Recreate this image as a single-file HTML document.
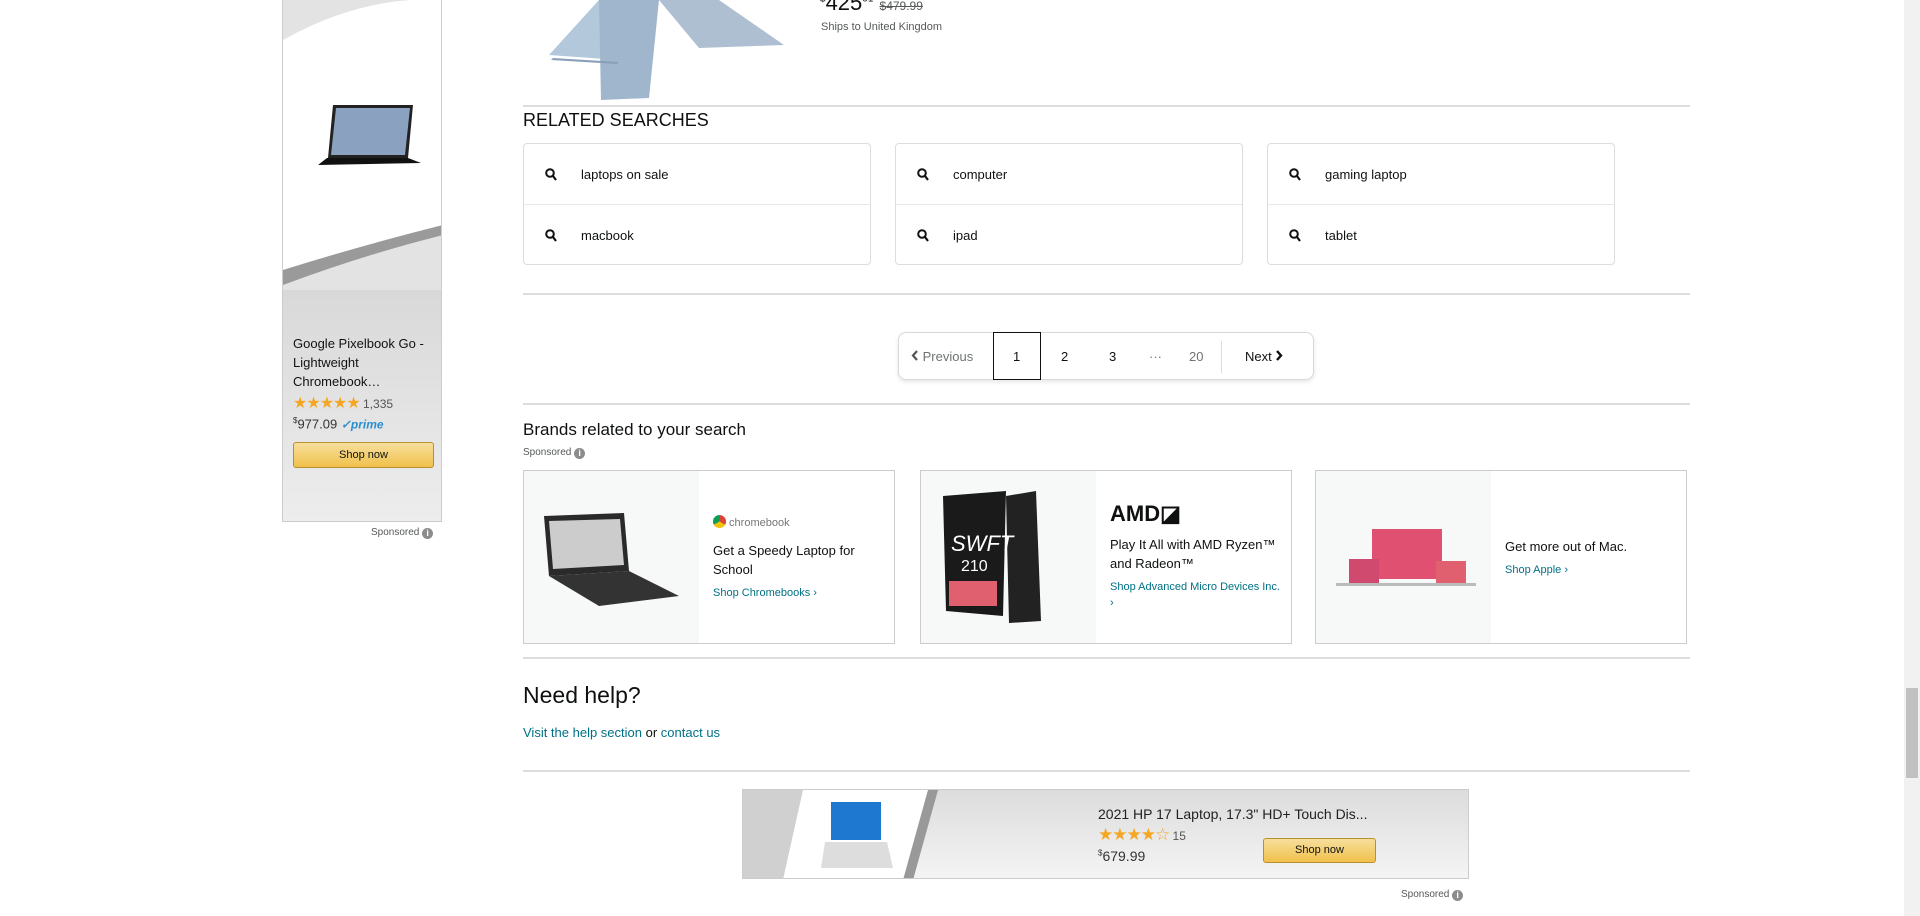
<!DOCTYPE html>
<html><head><meta charset="utf-8"><style>
*{box-sizing:border-box;margin:0;padding:0}
body{width:1920px;height:916px;overflow:hidden;background:#fff;font-family:"Liberation Sans",Arial,sans-serif;color:#0f1111;position:relative}
.a{position:absolute}
.hr{position:absolute;left:523px;width:1167px;height:2px;background:#ddd}
.rs{position:absolute;width:348px;height:122px;border:1px solid #ddd;border-radius:4px}
.rs div{height:61px;display:flex;align-items:center;font-size:13px;color:#0f1111}
.rs div:first-child{border-bottom:1px solid #e7e7e7}
.rs svg{margin:0 24px 0 21px}
.card{position:absolute;top:470px;width:372px;height:174px;border:1px solid #ccc;display:flex}
.card .im{width:175px;background:#f7f8f8;height:100%;position:relative}
.card .tx{padding-left:14px;display:flex;flex-direction:column;justify-content:center;font-size:13px;line-height:19px;width:185px}
.lk{color:#007185;font-size:11px;line-height:16px;margin-top:6px}
.sp{font-size:10px;color:#565959}
.i{display:inline-block;width:11px;height:11px;border-radius:50%;background:#8c8c8c;color:#fff;font-size:9px;line-height:11px;text-align:center;font-weight:bold;vertical-align:-1px}
.pg{position:absolute;top:332px;left:898px;width:416px;height:48px;border:1px solid #d5d9d9;border-radius:8px;box-shadow:0 2px 4px rgba(0,0,0,.1);font-size:13px}
.pg span{position:absolute;top:16px}
</style></head><body>
<div class="a" style="left:282px;top:0;width:160px;height:522px;border:1px solid #ccc;border-top:none;background:linear-gradient(#e0e0e0,#d6d6d6 50%,#ededed);overflow:hidden">
<svg width="160" height="290" style="position:absolute;left:0;top:0"><rect width="160" height="290" fill="#e3e3e3"/><path d="M0 40 Q80 -5 160 0 L160 225 Q80 245 0 270Z" fill="#fff"/><path d="M0 270 Q80 245 160 225 L160 235 Q80 255 0 285Z" fill="#9a9a9a"/><g transform="translate(20,100)"><path d="M30 5 L110 5 L105 58 L25 58Z" fill="#222"/><path d="M33 8 L107 8 L102 55 L28 55Z" fill="#8aa2c0"/><path d="M24 58 L105 58 L118 63 L15 65Z" fill="#111"/></g></svg>
<div class="a" style="left:10px;top:334px;width:142px;font-size:13px;line-height:19px;color:#111">Google Pixelbook Go - Lightweight Chromebook…</div>
<div class="a" style="left:10px;top:393px;font-size:12px;color:#555"><span style="color:#f5a623;font-size:16px;letter-spacing:-1px">★★★★★</span> 1,335</div>
<div class="a" style="left:10px;top:416px;font-size:13px;color:#333"><sup style="font-size:8px">$</sup>977.09 <span style="color:#2a8fcf;font-weight:bold;font-style:italic;font-size:12px">✓prime</span></div>
<div class="a" style="left:10px;top:442px;width:141px;height:26px;border:1px solid #b8912f;border-radius:3px;background:linear-gradient(#f7df9c,#f0c14b);font-size:11px;text-align:center;line-height:24px">Shop now</div>
</div>
<div class="a sp" style="left:371px;top:527px">Sponsored <span class="i">i</span></div>
<svg class="a" style="left:539px;top:0" width="250" height="102"><path d="M10 55 L60 0 L120 0 L80 60Z" fill="#b4c8dc"/><path d="M120 0 L180 0 L245 45 L160 48Z" fill="#aebfd2"/><path d="M60 0 L120 0 L110 98 L62 100Z" fill="#9fb6cc"/><path d="M14 58 L80 62 L78 64 L12 60Z" fill="#8aa0b8"/></svg>
<div class="a" style="left:820px;top:-10px;font-size:22px;color:#0f1111"><sup style="font-size:10px">$</sup>425<sup style="font-size:10px">01</sup> <span style="font-size:12px;color:#565959;text-decoration:line-through">$479.99</span></div>
<div class="a" style="left:821px;top:21px;font-size:11px;color:#565959">Ships to United Kingdom</div>
<div class="hr" style="top:105px"></div>
<div class="a" style="left:523px;top:110px;font-size:18px">RELATED SEARCHES</div>
<div class="rs" style="left:523px;top:143px"><div><svg width="12" height="13" viewBox="0 0 12 13"><circle cx="5" cy="5" r="3.8" fill="none" stroke="#111" stroke-width="2"/><path d="M8 8 L11 12" stroke="#111" stroke-width="2.2"/></svg>laptops on sale</div><div><svg width="12" height="13" viewBox="0 0 12 13"><circle cx="5" cy="5" r="3.8" fill="none" stroke="#111" stroke-width="2"/><path d="M8 8 L11 12" stroke="#111" stroke-width="2.2"/></svg>macbook</div></div>
<div class="rs" style="left:895px;top:143px"><div><svg width="12" height="13" viewBox="0 0 12 13"><circle cx="5" cy="5" r="3.8" fill="none" stroke="#111" stroke-width="2"/><path d="M8 8 L11 12" stroke="#111" stroke-width="2.2"/></svg>computer</div><div><svg width="12" height="13" viewBox="0 0 12 13"><circle cx="5" cy="5" r="3.8" fill="none" stroke="#111" stroke-width="2"/><path d="M8 8 L11 12" stroke="#111" stroke-width="2.2"/></svg>ipad</div></div>
<div class="rs" style="left:1267px;top:143px"><div><svg width="12" height="13" viewBox="0 0 12 13"><circle cx="5" cy="5" r="3.8" fill="none" stroke="#111" stroke-width="2"/><path d="M8 8 L11 12" stroke="#111" stroke-width="2.2"/></svg>gaming laptop</div><div><svg width="12" height="13" viewBox="0 0 12 13"><circle cx="5" cy="5" r="3.8" fill="none" stroke="#111" stroke-width="2"/><path d="M8 8 L11 12" stroke="#111" stroke-width="2.2"/></svg>tablet</div></div>
<div class="hr" style="top:293px"></div>
<div class="pg">
<span style="left:12px;color:#6f7373"><svg width="8" height="11" viewBox="0 0 8 11"><path d="M6 1 L2 5.5 L6 10" fill="none" stroke="#555" stroke-width="2.2"/></svg> Previous</span>
<div class="a" style="left:94px;top:-1px;width:48px;height:48px;border:1px solid #111"></div>
<span style="left:114px">1</span><span style="left:162px">2</span><span style="left:210px">3</span><span style="left:250px;color:#777">···</span><span style="left:290px;color:#6f7373">20</span>
<div class="a" style="left:322px;top:8px;width:1px;height:32px;background:#ddd"></div>
<span style="left:346px">Next <svg width="8" height="11" viewBox="0 0 8 11"><path d="M2 1 L6 5.5 L2 10" fill="none" stroke="#111" stroke-width="2.4"/></svg></span>
</div>
<div class="hr" style="top:403px"></div>
<div class="a" style="left:523px;top:420px;font-size:17px">Brands related to your search</div>
<div class="a sp" style="left:523px;top:447px">Sponsored <span class="i">i</span></div>
<div class="card" style="left:523px"><div class="im"><svg width="175" height="172"><path d="M20 45 L100 42 L105 100 L25 105Z" fill="#2a2a2a"/><path d="M25 50 L96 48 L100 94 L29 98Z" fill="#ccc"/><path d="M25 105 L105 100 L155 125 L75 135Z" fill="#333"/></svg></div><div class="tx"><div style="font-size:11px;color:#777;margin-bottom:8px"><span style="display:inline-block;width:13px;height:13px;border-radius:50%;background:conic-gradient(#db4437 0 120deg,#f4c20d 0 240deg,#0f9d58 0);vertical-align:-2px"></span> chromebook</div>Get a Speedy Laptop for School<div class="lk">Shop Chromebooks ›</div></div></div>
<div class="card" style="left:920px"><div class="im"><svg width="175" height="172"><path d="M22 25 L85 20 L82 145 L25 140Z" fill="#1a1a1a"/><path d="M85 25 L115 20 L120 150 L88 152Z" fill="#222"/><rect x="28" y="110" width="48" height="25" fill="#e06070"/><text x="30" y="80" fill="#fff" font-size="22" font-style="italic" font-family="Liberation Sans">SWFT</text><text x="40" y="100" fill="#fff" font-size="16" font-family="Liberation Sans">210</text></svg></div><div class="tx"><div style="font-size:22px;font-weight:bold;margin-bottom:12px">AMD◪</div>Play It All with AMD Ryzen™ and Radeon™<div class="lk">Shop Advanced Micro Devices Inc. ›</div></div></div>
<div class="card" style="left:1315px"><div class="im"><svg width="175" height="172"><rect x="56" y="58" width="70" height="50" fill="#e05070"/><rect x="33" y="88" width="30" height="24" fill="#d04a70"/><rect x="120" y="90" width="30" height="24" fill="#e06070"/><rect x="20" y="112" width="140" height="3" fill="#bbb"/></svg></div><div class="tx">Get more out of Mac.<div class="lk">Shop Apple ›</div></div></div>
<div class="hr" style="top:657px"></div>
<div class="a" style="left:523px;top:682px;font-size:23px">Need help?</div>
<div class="a" style="left:523px;top:725px;font-size:13px"><span style="color:#007185">Visit the help section</span> or <span style="color:#007185">contact us</span></div>
<div class="hr" style="top:770px"></div>
<div class="a" style="left:742px;top:789px;width:727px;height:90px;border:1px solid #ccc;background:linear-gradient(#dcdcdc,#f4f4f4);overflow:hidden">
<svg width="250" height="90" class="a" style="left:0;top:0"><path d="M0 0 L60 0 L40 90 L0 90Z" fill="#d0d0d0"/><path d="M60 0 L185 0 L160 90 L40 90Z" fill="#fff"/><path d="M185 0 L195 0 L170 90 L160 90Z" fill="#999"/><rect x="88" y="12" width="50" height="38" fill="#1e78d0"/><path d="M82 52 L144 52 L150 78 L78 78Z" fill="#ddd"/></svg>
<div class="a" style="left:355px;top:16px;font-size:14px;color:#222">2021 HP 17 Laptop, 17.3" HD+ Touch Dis...</div>
<div class="a" style="left:355px;top:35px;font-size:12px;color:#555"><span style="color:#f5a623;font-size:17px;letter-spacing:-1px">★★★★☆</span> 15</div>
<div class="a" style="left:355px;top:58px;font-size:14px;color:#333"><sup style="font-size:8px">$</sup>679.99</div>
<div class="a" style="left:520px;top:48px;width:113px;height:25px;border:1px solid #b8912f;border-radius:3px;background:linear-gradient(#f7df9c,#f0c14b);font-size:11px;text-align:center;line-height:23px">Shop now</div>
</div>
<div class="a sp" style="left:1401px;top:889px">Sponsored <span class="i">i</span></div>
<div class="a" style="left:1904px;top:0;width:16px;height:916px;background:#f1f1f1"></div>
<div class="a" style="left:1906px;top:688px;width:12px;height:90px;background:#c1c1c1"></div>
</body></html>
